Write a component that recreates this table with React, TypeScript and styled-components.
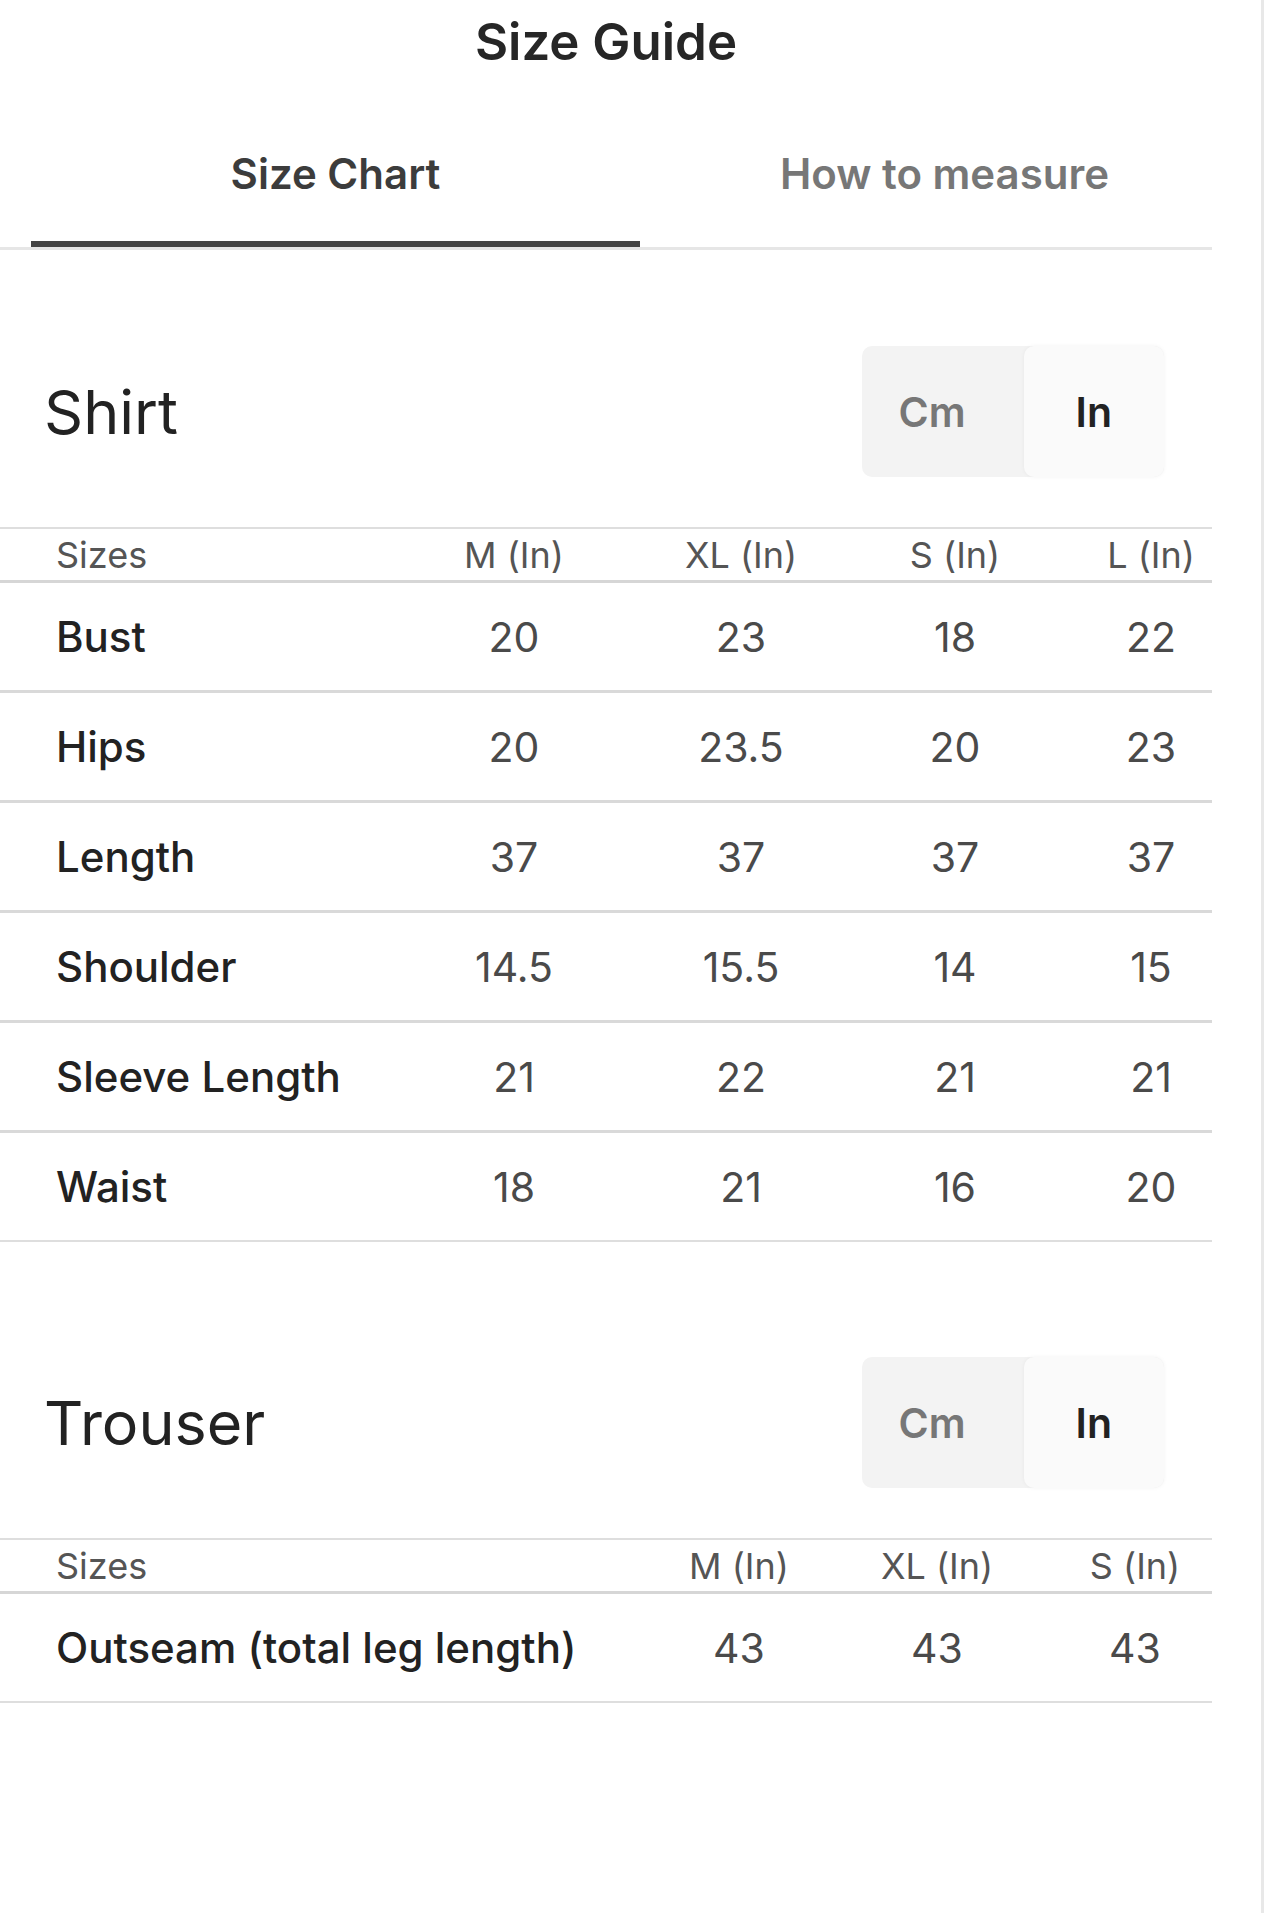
import React from "react";
import styled, { createGlobalStyle } from "styled-components";

const GlobalStyle = createGlobalStyle`
  html, body {
    margin: 0;
    padding: 0;
    background: #fff;
  }
  body {
    font-family: Inter, "Noto Sans", "Liberation Sans", sans-serif;
    color: #222;
  }
`;

const Page = styled.div`
  display: flex;
  min-height: 100vh;
`;

const Main = styled.div`
  width: 1212px;
  flex-shrink: 0;
`;

const Rail = styled.div`
  margin-left: auto;
  width: 3px;
  background: #e8e8e8;
`;

const Title = styled.h1`
  margin: 0;
  padding-top: 10px;
  font-size: 51px;
  line-height: 64px;
  font-weight: 600;
  text-align: center;
  color: #262626;
`;

const TabBar = styled.div`
  display: flex;
  margin-top: 74px;
  padding-left: 31px;
  border-bottom: 3px solid #e6e6e6;
`;

const Tab = styled.div<{ $active?: boolean }>`
  flex: 0 0 609px;
  padding-bottom: 41px;
  font-size: 42px;
  line-height: 52px;
  font-weight: 600;
  text-align: center;
  color: ${(p) => (p.$active ? "#3c3c3c" : "#777")};
  border-bottom: 6px solid ${(p) => (p.$active ? "#444" : "transparent")};
`;

const SectionHeader = styled.div<{ $top: number }>`
  display: flex;
  align-items: center;
  justify-content: space-between;
  height: 131px;
  margin-top: ${(p) => p.$top}px;
  padding: 0 48px 0 44px;
`;

const Heading = styled.h2`
  margin: 0;
  font-size: 61px;
  font-weight: 400;
  color: #222;
`;

const Toggle = styled.div`
  display: flex;
  height: 131px;
  background: #f3f3f3;
  border-radius: 10px;
`;

const Segment = styled.div<{ $active?: boolean }>`
  display: flex;
  align-items: center;
  padding: ${(p) => (p.$active ? "0 52px" : "0 58px 0 36px")};
  font-size: 41px;
  font-weight: 600;
  border-radius: 10px;
  color: ${(p) => (p.$active ? "#222" : "#777")};
  background: ${(p) => (p.$active ? "#fafafa" : "transparent")};
  box-shadow: ${(p) => (p.$active ? "0 0 4px rgba(0,0,0,0.05)" : "none")};
`;

const Table = styled.div`
  margin-top: 50px;
`;

const Row = styled.div<{ $cols: string }>`
  display: grid;
  grid-template-columns: ${(p) => p.$cols};
  align-items: center;
`;

const HeadRow = styled(Row)`
  height: 51px;
  border-top: 2px solid #dedede;
  border-bottom: 3px solid #d6d6d6;
`;

const BodyRow = styled(Row)`
  height: 107px;
  border-bottom: 3px solid #d9d9d9;
  &:last-child {
    border-bottom: 2px solid #dedede;
  }
`;

const HeadCell = styled.div<{ $label?: boolean }>`
  font-size: 36px;
  color: #555;
  text-align: ${(p) => (p.$label ? "left" : "center")};
  padding-left: ${(p) => (p.$label ? "56px" : "0")};
  white-space: nowrap;
`;

const LabelCell = styled.div`
  padding-left: 56px;
  font-size: 42px;
  font-weight: 500;
  color: #222;
  white-space: nowrap;
`;

const ValueCell = styled.div`
  font-size: 41px;
  color: #4a4a4a;
  text-align: center;
`;

type Chart = {
  name: string;
  top: number;
  cols: string;
  sizes: string[];
  rows: [string, string[]][];
};

const charts: Chart[] = [
  {
    name: "Shirt",
    top: 96,
    cols: "400px 228px 226px 202px 190px",
    sizes: ["M (In)", "XL (In)", "S (In)", "L (In)"],
    rows: [
      ["Bust", ["20", "23", "18", "22"]],
      ["Hips", ["20", "23.5", "20", "23"]],
      ["Length", ["37", "37", "37", "37"]],
      ["Shoulder", ["14.5", "15.5", "14", "15"]],
      ["Sleeve Length", ["21", "22", "21", "21"]],
      ["Waist", ["18", "21", "16", "20"]],
    ],
  },
  {
    name: "Trouser",
    top: 115,
    cols: "640px 198px 198px 198px",
    sizes: ["M (In)", "XL (In)", "S (In)"],
    rows: [["Outseam (total leg length)", ["43", "43", "43"]]],
  },
];

export default function App() {
  return (
    <Page>
      <GlobalStyle />
      <Main>
        <Title>Size Guide</Title>
        <TabBar>
          <Tab $active>Size Chart</Tab>
          <Tab>How to measure</Tab>
        </TabBar>

        {charts.map((c) => (
          <section key={c.name}>
            <SectionHeader $top={c.top}>
              <Heading>{c.name}</Heading>
              <Toggle>
                <Segment>Cm</Segment>
                <Segment $active>In</Segment>
              </Toggle>
            </SectionHeader>
            <Table>
              <HeadRow $cols={c.cols}>
                <HeadCell $label>Sizes</HeadCell>
                {c.sizes.map((s) => (
                  <HeadCell key={s}>{s}</HeadCell>
                ))}
              </HeadRow>
              {c.rows.map(([label, values]) => (
                <BodyRow key={label} $cols={c.cols}>
                  <LabelCell>{label}</LabelCell>
                  {values.map((v, i) => (
                    <ValueCell key={i}>{v}</ValueCell>
                  ))}
                </BodyRow>
              ))}
            </Table>
          </section>
        ))}
      </Main>
      <Rail />
    </Page>
  );
}
